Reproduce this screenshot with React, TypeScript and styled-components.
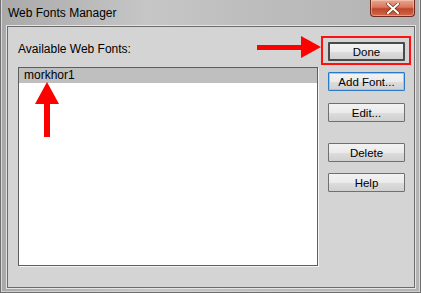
import React from "react";
import styled, { createGlobalStyle, css } from "styled-components";

const GlobalStyle = createGlobalStyle`
  html, body { margin: 0; padding: 0; background: #ffffff; }
  body { font-family: "Liberation Sans", Arial, sans-serif; }
`;

const Window = styled.div`
  position: relative;
  width: 421px;
  height: 293px;
  box-sizing: border-box;
  display: flex;
  flex-direction: column;
  background: linear-gradient(90deg, #a9a9a9 0%, #c6c6c6 35%, #bdbdbd 60%, #b3b3b3 100%);
  border-left: 1px solid #6f6f6f;
  border-right: 1px solid #6f6f6f;
  border-bottom: 1px solid #6f6f6f;
  box-shadow: inset 1px 0 0 #d8d8d8, inset -1px 0 0 #d8d8d8, inset 0 -1px 0 #cfcfcf;
  overflow: hidden;
`;

const TitleBar = styled.div`
  height: 26px;
  display: flex;
  align-items: flex-start;
  justify-content: space-between;
  padding-left: 7px;
  padding-right: 5px;
`;

const Title = styled.div`
  font-family: "Liberation Sans", Arial, sans-serif;
  font-size: 12px;
  color: #000;
  line-height: 14px;
  margin-top: 6px;
`;

const CloseButton = styled.div`
  width: 45px;
  height: 17px;
  box-sizing: border-box;
  display: flex;
  align-items: center;
  justify-content: center;
  border: 1px solid #6e2a1e;
  border-top: none;
  border-radius: 0 0 4px 4px;
  background: linear-gradient(180deg, #e8a690 0%, #d8775c 45%, #c04528 55%, #cf6a4a 100%);
  box-shadow: inset 0 0 0 1px rgba(255, 220, 200, 0.45);
`;

const Body = styled.div`
  position: relative;
  flex: 1;
  margin: 0 5px 4px 6px;
  background: #d4d4d4;
  border: 1px solid #6b6b6b;
  box-shadow: 0 0 0 1px #e4e4e4;
  display: flex;
  padding: 9px 9px 21px 10px;
  gap: 10px;
`;

const LeftColumn = styled.div`
  display: flex;
  flex-direction: column;
  width: 300px;
`;

const Label = styled.div`
  font-size: 12px;
  line-height: 14px;
  color: #000;
  margin-top: 6px;
  margin-bottom: 11px;
`;

const ListBox = styled.div`
  flex: 1;
  background: #ffffff;
  border: 1px solid #5e5e5e;
  box-shadow: 1px 1px 0 #f4f4f4;
`;

const ListItem = styled.div<{ $selected?: boolean }>`
  font-size: 12px;
  line-height: 15px;
  padding-left: 5px;
  color: #000;
  ${(p) =>
    p.$selected &&
    css`
      background: #bfbfbf;
    `}
`;

const ButtonColumn = styled.div`
  display: flex;
  flex-direction: column;
  width: 77px;
`;

const Highlight = styled.div`
  border: 2px solid #ff1010;
  padding: 4px 4px 2px 5px;
  margin: 0 -6px -4px -7px;
`;

const Button = styled.div<{ $variant?: "default" | "focused" | "normal"; $gapAbove?: number }>`
  height: 19px;
  box-sizing: border-box;
  display: flex;
  align-items: center;
  justify-content: center;
  font-size: 11.5px;
  color: #000;
  background: linear-gradient(180deg, #f2f2f2 0%, #ebebeb 50%, #dddddd 51%, #d0d0d0 100%);
  border: 1px solid #707070;
  border-radius: 1px;
  margin-top: ${(p) => p.$gapAbove ?? 0}px;
  ${(p) =>
    p.$variant === "default" &&
    css`
      border: 2px solid #4a4a4a;
    `}
  ${(p) =>
    p.$variant === "focused" &&
    css`
      border: 1px solid #2a78c8;
      box-shadow: inset 0 0 0 1px #9cc8ee;
    `}
`;

const ArrowRight = styled.svg`
  position: absolute;
  left: 249px;
  top: 9px;
`;

const ArrowUp = styled.svg`
  position: absolute;
  left: 26px;
  top: 55px;
`;

export default function App() {
  return (
    <>
      <GlobalStyle />
      <Window>
        <TitleBar>
          <Title>Web Fonts Manager</Title>
          <CloseButton>
            <svg width="14" height="11" viewBox="0 0 14 11">
              <path d="M2 1 L12 10 M12 1 L2 10" stroke="#6a2a1a" strokeWidth="3.4" strokeLinecap="round" />
              <path d="M2 1 L12 10 M12 1 L2 10" stroke="#ffffff" strokeWidth="2.2" strokeLinecap="round" />
            </svg>
          </CloseButton>
        </TitleBar>
        <Body>
          <LeftColumn>
            <Label>Available Web Fonts:</Label>
            <ListBox>
              <ListItem $selected>morkhor1</ListItem>
            </ListBox>
          </LeftColumn>
          <ButtonColumn>
            <Highlight>
              <Button $variant="default">Done</Button>
            </Highlight>
            <Button $variant="focused" $gapAbove={11}>Add Font...</Button>
            <Button $gapAbove={12}>Edit...</Button>
            <Button $gapAbove={21}>Delete</Button>
            <Button $gapAbove={11}>Help</Button>
          </ButtonColumn>
          <ArrowRight width="66" height="24" viewBox="0 0 66 24">
            <polygon points="0,9 44,9 44,0 64,11 44,22 44,14 0,14" fill="#ff0000" />
          </ArrowRight>
          <ArrowUp width="26" height="56" viewBox="0 0 26 56">
            <polygon points="13,0 25,22 16,22 16,55 10,55 10,22 1,22" fill="#ff0000" />
          </ArrowUp>
        </Body>
      </Window>
    </>
  );
}
